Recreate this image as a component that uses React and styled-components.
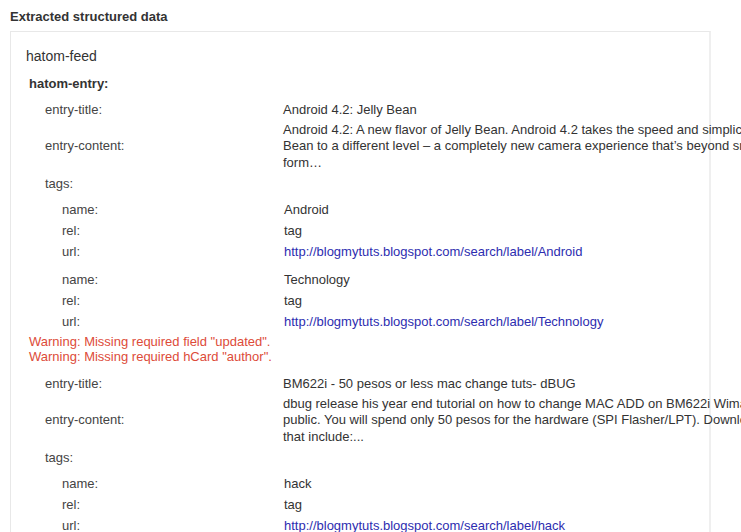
import React from "react";
import styled, { createGlobalStyle } from "styled-components";

const Global = createGlobalStyle`
  html, body { margin: 0; padding: 0; background: #fff; overflow: hidden; }
  body { font-family: Arial, "Liberation Sans", sans-serif; color: #333; }
`;

const Page = styled.div`
  padding: 9px 0 40px 10px;
`;

const Heading = styled.h2`
  margin: 0;
  font-size: 13px;
  line-height: 16px;
  font-weight: bold;
  color: #333;
`;

const Box = styled.div`
  margin-top: 6px;
  width: 683px;
  border: 1px solid #e8e8e8;
  border-right-width: 2px;
  border-right-color: #efefef;
  padding: 14px 0 30px 15px;
  box-sizing: content-box;
  min-height: 600px;
`;

const Feed = styled.div`
  font-size: 14px;
  line-height: 20px;
  color: #333;
`;

const EntryHead = styled.div`
  margin: 8.5px 0 0 3px;
  font-size: 13px;
  line-height: 17px;
  font-weight: bold;
  color: #333;
`;

const Entry = styled.div`
  margin-top: ${(p) => p.$gap}px;
  padding-left: 19px;
`;

const Row = styled.div`
  display: grid;
  grid-template-columns: ${(p) => p.$label}px max-content;
  align-items: center;
  padding: 2px 0;
  font-size: 13px;
  line-height: ${(p) => (p.$multi ? "16.5px" : "17px")};
`;

const Label = styled.div`
  color: #444;
`;

const Value = styled.div`
  color: #333;
  white-space: pre;
`;

const Link = styled.a`
  color: #2d2db0;
  text-decoration: none;
`;

const TagGroup = styled.div`
  margin-top: ${(p) => p.$gap}px;
  padding-left: 17px;
`;

const Warnings = styled.div`
  margin: 2px 0 0 -16px;
  font-size: 13px;
  line-height: 15px;
  color: #dd4b39;
`;

const entries = [
  {
    title: "Android 4.2: Jelly Bean",
    content:
      "Android 4.2: A new flavor of Jelly Bean. Android 4.2 takes the speed and simplicity of Jelly\nBean to a different level – a completely new camera experience that’s beyond smart phone\nform…",
    tags: [
      { name: "Android", url: "http://blogmytuts.blogspot.com/search/label/Android" },
      { name: "Technology", url: "http://blogmytuts.blogspot.com/search/label/Technology" },
    ],
    warnings: [
      'Warning: Missing required field "updated".',
      'Warning: Missing required hCard "author".',
    ],
  },
  {
    title: "BM622i - 50 pesos or less mac change tuts- dBUG",
    content:
      "dbug release his year end tutorial on how to change MAC ADD on BM622i Wimax modem to the\npublic. You will spend only 50 pesos for the hardware (SPI Flasher/LPT). Download the files\nthat include:...",
    tags: [{ name: "hack", url: "http://blogmytuts.blogspot.com/search/label/hack" }],
    warnings: [],
  },
];

export default function App() {
  return (
    <>
      <Global />
      <Page>
        <Heading>Extracted structured data</Heading>
        <Box>
          <Feed>hatom-feed</Feed>
          <EntryHead>hatom-entry:</EntryHead>
          {entries.map((e, i) => (
            <Entry key={i} $gap={i === 0 ? 7 : 9}>
              <Row $label={238}>
                <Label>entry-title:</Label>
                <Value>{e.title}</Value>
              </Row>
              <Row $label={238} $multi>
                <Label>entry-content:</Label>
                <Value>{e.content}</Value>
              </Row>
              <Row $label={238}>
                <Label>tags:</Label>
              </Row>
              {e.tags.map((t, j) => (
                <TagGroup key={j} $gap={j === 0 ? 4.5 : 7}>
                  <Row $label={222}>
                    <Label>name:</Label>
                    <Value>{t.name}</Value>
                  </Row>
                  <Row $label={222}>
                    <Label>rel:</Label>
                    <Value>tag</Value>
                  </Row>
                  <Row $label={222}>
                    <Label>url:</Label>
                    <Value>
                      <Link href="#">{t.url}</Link>
                    </Value>
                  </Row>
                </TagGroup>
              ))}
              {e.warnings.length > 0 && (
                <Warnings>
                  {e.warnings.map((w, k) => (
                    <div key={k}>{w}</div>
                  ))}
                </Warnings>
              )}
            </Entry>
          ))}
        </Box>
      </Page>
    </>
  );
}
